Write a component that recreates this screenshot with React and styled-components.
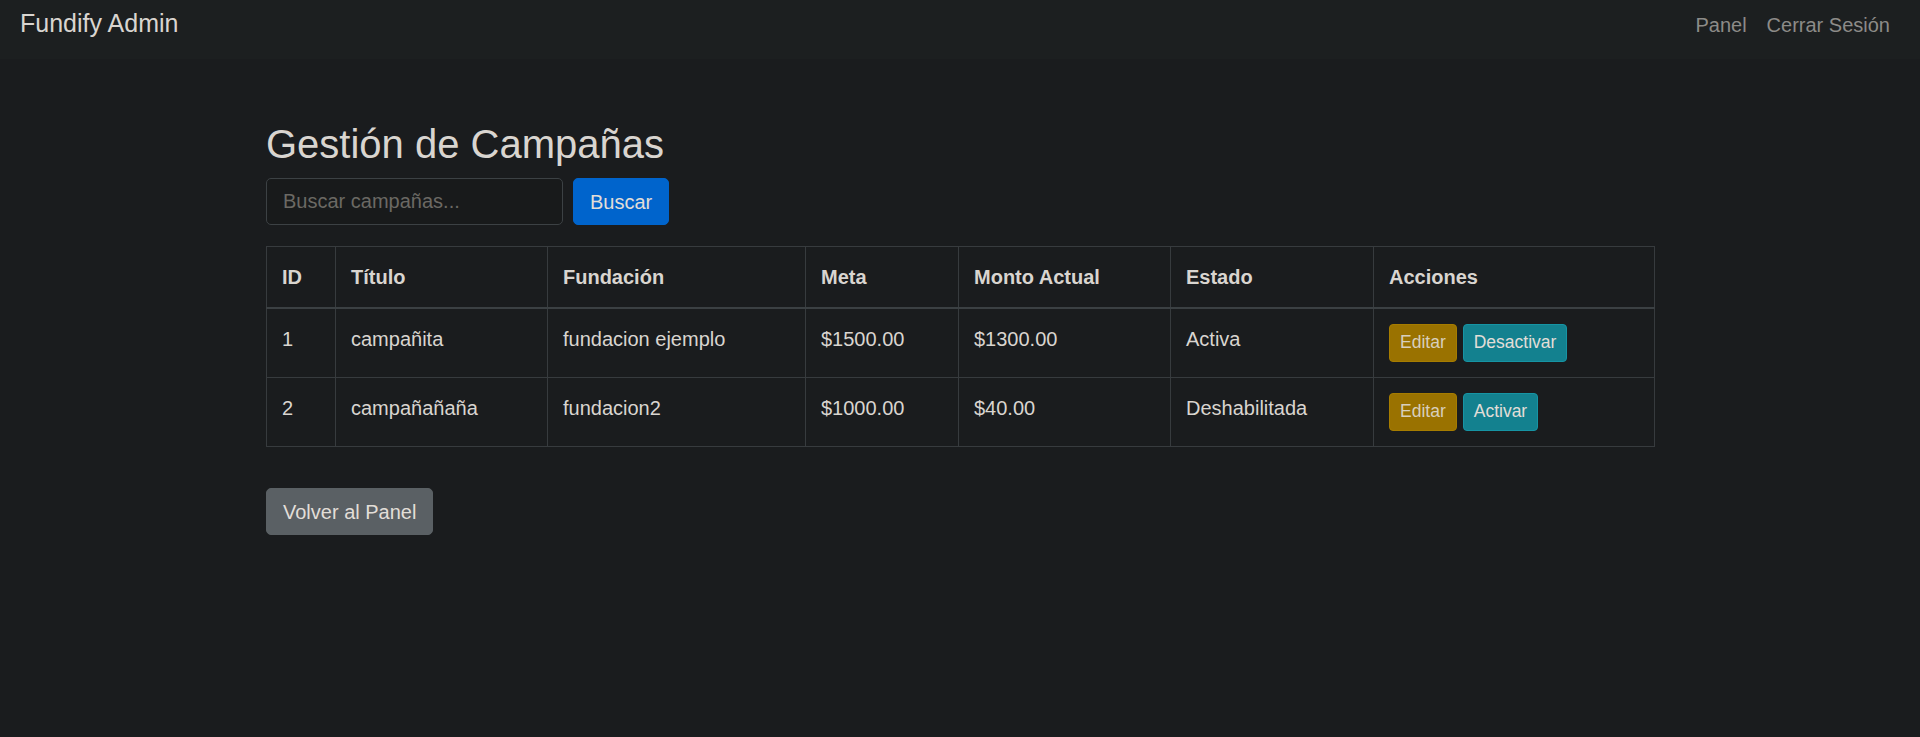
import React from 'react';
import styled, { createGlobalStyle } from 'styled-components';

const GlobalStyle = createGlobalStyle`
    * {
        box-sizing: border-box;
    }
    html, body {
        margin: 0;
        padding: 0;
        background: #1a1c1e;
        color: #d9d5d0;
        font-family: "Liberation Sans", Arial, sans-serif;
        font-size: 20px;
        line-height: 1.5;
    }
`

const Page = styled.div`
    min-height: 737px;
    background: #1a1c1e;
`

const Navbar = styled.nav`
    height: 59px;
    padding: 5px 20px 0;
    background: #1c1f20;
    display: flex;
    flex-direction: row;
    justify-content: space-between;
    align-items: flex-start;
`

const Brand = styled.a`
    font-size: 25px;
    line-height: 37px;
    color: #d9d5d0;
    text-decoration: none;
`

const NavLinks = styled.div`
    display: flex;
    flex-direction: row;
    margin-top: 5px;
`

const NavLink = styled.a`
    padding: 0 10px;
    font-size: 20px;
    line-height: 30px;
    color: #8c8b88;
    text-decoration: none;
`

const Main = styled.main`
    width: 1388px;
    margin: 0 auto;
    padding-top: 61px;
`

const Title = styled.h1`
    margin: 0 0 10px;
    font-size: 40px;
    font-weight: 400;
    line-height: 48px;
    color: #d9d5d0;
`

const SearchForm = styled.form`
    display: flex;
    flex-direction: row;
    gap: 10px;
    margin-bottom: 21px;
`

const SearchInput = styled.input`
    width: 297px;
    height: 47px;
    padding: 0 16px;
    border: 1px solid #3c4144;
    border-radius: 5px;
    background: #181a1b;
    color: #d9d5d0;
    font-family: inherit;
    font-size: 20px;
    outline: none;

    &::placeholder {
        color: #6b6964;
    }
`

const Button = styled.button`
    height: ${props => props.small ? '38px' : '47px'};
    padding: ${props => props.small ? '0 10px' : '0 16px'};
    border: 1px solid ${props => props.border};
    border-radius: ${props => props.small ? '4px' : '5px'};
    background: ${props => props.bg};
    color: ${props => props.color || '#e2ded8'};
    font-family: inherit;
    font-size: ${props => props.small ? '17.5px' : '20px'};
    line-height: 1;
    cursor: pointer;
`

const Table = styled.table`
    width: 1388px;
    table-layout: fixed;
    border-collapse: collapse;
    margin-bottom: 41px;
`

const Th = styled.th`
    padding: 15px 15px;
    border: 1px solid #373b3e;
    border-bottom: 2px solid #3b4043;
    text-align: left;
    vertical-align: top;
    font-weight: 700;
    font-size: 20px;
    line-height: 30px;
    color: #d9d5d0;
`

const Td = styled.td`
    padding: 15px 15px;
    border: 1px solid #373b3e;
    vertical-align: top;
    font-size: 20px;
    line-height: 30px;
    color: #d9d5d0;
`

const Actions = styled.div`
    display: flex;
    flex-direction: row;
    gap: 6px;
`

const columns = [
    { label: 'ID', width: 69 },
    { label: 'Título', width: 212 },
    { label: 'Fundación', width: 258 },
    { label: 'Meta', width: 153 },
    { label: 'Monto Actual', width: 212 },
    { label: 'Estado', width: 203 },
    { label: 'Acciones', width: 281 },
]

const campaigns = [
    { id: 1, titulo: 'campañita', fundacion: 'fundacion ejemplo', meta: '$1500.00', monto: '$1300.00', estado: 'Activa' },
    { id: 2, titulo: 'campañañaña', fundacion: 'fundacion2', meta: '$1000.00', monto: '$40.00', estado: 'Deshabilitada' },
]

export default function App() {
    return (
        <Page>
            <GlobalStyle />
            <Navbar>
                <Brand href="#">Fundify Admin</Brand>
                <NavLinks>
                    <NavLink href="#">Panel</NavLink>
                    <NavLink href="#">Cerrar Sesión</NavLink>
                </NavLinks>
            </Navbar>

            <Main>
                <Title>Gestión de Campañas</Title>

                <SearchForm onSubmit={e => e.preventDefault()}>
                    <SearchInput placeholder="Buscar campañas..." />
                    <Button type="submit" bg="#0064cc" border="#0064cc">Buscar</Button>
                </SearchForm>

                <Table>
                    <colgroup>
                        {columns.map(c => <col key={c.label} style={{ width: c.width }} />)}
                    </colgroup>
                    <thead>
                        <tr>
                            {columns.map(c => <Th key={c.label}>{c.label}</Th>)}
                        </tr>
                    </thead>
                    <tbody>
                        {campaigns.map(c => (
                            <tr key={c.id}>
                                <Td>{c.id}</Td>
                                <Td>{c.titulo}</Td>
                                <Td>{c.fundacion}</Td>
                                <Td>{c.meta}</Td>
                                <Td>{c.monto}</Td>
                                <Td>{c.estado}</Td>
                                <Td>
                                    <Actions>
                                        <Button small bg="#9a7200" border="#a67c00" color="#d8cfbd">Editar</Button>
                                        <Button small bg="#13818f" border="#1694a4">
                                            {c.estado === 'Activa' ? 'Desactivar' : 'Activar'}
                                        </Button>
                                    </Actions>
                                </Td>
                            </tr>
                        ))}
                    </tbody>
                </Table>

                <Button bg="#5a6064" border="#5a6064">Volver al Panel</Button>
            </Main>
        </Page>
    );
}
